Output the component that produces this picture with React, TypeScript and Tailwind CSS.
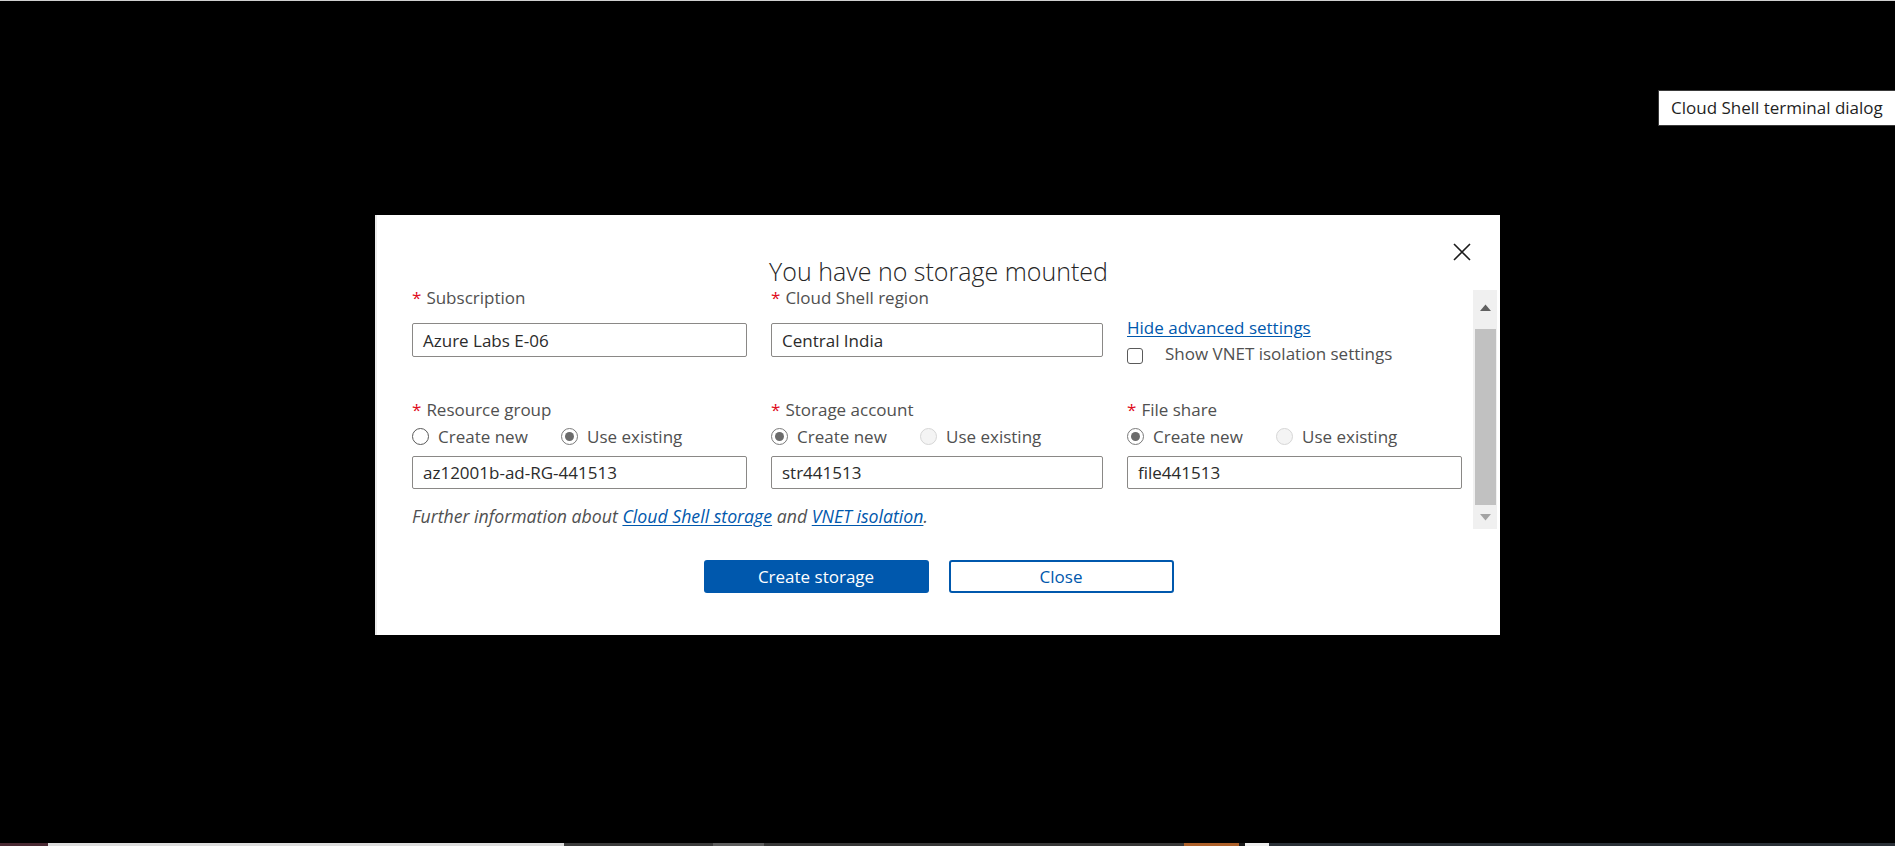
import React from "react";

const font = { fontFamily: '"Open Sans", "Noto Sans", sans-serif' };

function Req({ children }: { children: React.ReactNode }) {
  return (
    <div className="flex items-baseline h-[23px] leading-[23px] text-[17px] text-[#505050]">
      <span className="text-[#e00b1c] mr-[5px] text-[17px]">*</span>
      <span>{children}</span>
    </div>
  );
}

function Input({ value, h = "h-[34px]" }: { value: string; h?: string }) {
  return (
    <div
      className={`${h} w-full border border-[#8a8886] rounded-[2px] flex items-center pl-[10px] text-[17px] leading-[23px] text-[#2b2b2b] bg-white`}
    >
      {value}
    </div>
  );
}

function Radio({
  label,
  state,
  w,
}: {
  label: string;
  state: "off" | "on" | "disabled";
  w: string;
}) {
  return (
    <div className={`flex items-center ${w}`}>
      {state === "off" && (
        <span className="w-[17px] h-[17px] rounded-full border border-[#5a5a5a] bg-white box-border" />
      )}
      {state === "on" && (
        <span className="w-[17px] h-[17px] rounded-full border border-[#7a7a7a] bg-white box-border flex items-center justify-center">
          <span className="w-[9px] h-[9px] rounded-full bg-[#6b6b6b]" />
        </span>
      )}
      {state === "disabled" && (
        <span className="w-[17px] h-[17px] rounded-full border border-[#d6d6d6] bg-[#f4f4f4] box-border" />
      )}
      <span className="ml-[9px] text-[17px] leading-[23px] text-[#505050]">{label}</span>
    </div>
  );
}

export default function App() {
  return (
    <div className="w-[1895px] h-[846px] bg-black relative overflow-hidden" style={font}>
      <div className="h-px w-full bg-[#cfcfcf]" />

      {/* tooltip */}
      <div className="absolute left-[1658px] top-[90px] w-[240px] h-[36px] bg-white border border-[#3a3a3a] flex items-center pl-[12px] text-[17px] text-[#1f1f1f] leading-[22px] whitespace-nowrap">
        Cloud Shell terminal dialog
      </div>

      {/* dialog */}
      <div className="ml-[375px] mt-[214px] w-[1125px] h-[420px] bg-white relative border-l-[2px] border-[#ececec]">
        <button className="absolute left-[1076px] top-[28px] w-[18px] h-[18px]">
          <svg width="18" height="18" viewBox="0 0 18 18">
            <path d="M1 1 L17 17 M17 1 L1 17" stroke="#1b1b1b" strokeWidth="1.6" fill="none" />
          </svg>
        </button>

        <div className="pt-[42px] text-center text-[25px] leading-[29px] font-light text-[#252525]">
          You have no storage mounted
        </div>

        <div className="flex items-start">
          <div className="ml-[35px] w-[1050px]">
            <div className="grid grid-cols-[335px_332px_335px] gap-x-[24px]">
              <div className="flex flex-col">
                <Req>Subscription</Req>
                <div className="mt-[14px]">
                  <Input value="Azure Labs E-06" />
                </div>
              </div>
              <div className="flex flex-col">
                <Req>Cloud Shell region</Req>
                <div className="mt-[14px]">
                  <Input value="Central India" />
                </div>
              </div>
              <div className="flex flex-col pt-[30px] h-[71px]">
                <a className="text-[17px] leading-[23px] text-[#0058ad] underline underline-offset-2 cursor-pointer">
                  Hide advanced settings
                </a>
                <div className="flex items-center mt-[3px] h-[23px]">
                  <span className="w-[16px] h-[16px] mt-[4px] border border-[#5a5a5a] rounded-[3px] bg-white" />
                  <span className="ml-[22px] text-[17px] leading-[23px] text-[#505050]">
                    Show VNET isolation settings
                  </span>
                </div>
              </div>

              <div className="flex flex-col mt-[41px]">
                <Req>Resource group</Req>
                <div className="flex items-center mt-[4px] h-[23px]">
                  <Radio label="Create new" state="off" w="w-[149px]" />
                  <Radio label="Use existing" state="on" w="" />
                </div>
                <div className="mt-[8px]">
                  <Input value="az12001b-ad-RG-441513" h="h-[33px]" />
                </div>
              </div>
              <div className="flex flex-col mt-[41px]">
                <Req>Storage account</Req>
                <div className="flex items-center mt-[4px] h-[23px]">
                  <Radio label="Create new" state="on" w="w-[149px]" />
                  <Radio label="Use existing" state="disabled" w="" />
                </div>
                <div className="mt-[8px]">
                  <Input value="str441513" h="h-[33px]" />
                </div>
              </div>
              <div className="flex flex-col mt-[41px]">
                <Req>File share</Req>
                <div className="flex items-center mt-[4px] h-[23px]">
                  <Radio label="Create new" state="on" w="w-[149px]" />
                  <Radio label="Use existing" state="disabled" w="" />
                </div>
                <div className="mt-[8px]">
                  <Input value="file441513" h="h-[33px]" />
                </div>
              </div>
            </div>
            <div className="mt-[16px] text-[17.7px] leading-[23px] italic text-[#505050]">
              Further information about{" "}
              <a className="text-[#0058ad] underline underline-offset-2 cursor-pointer">Cloud Shell storage</a> and{" "}
              <a className="text-[#0058ad] underline underline-offset-2 cursor-pointer">VNET isolation</a>.
            </div>
          </div>

          {/* scrollbar */}
          <div className="ml-[11px] mt-[4px] w-[24px] h-[239px] bg-[#f0f0f0] flex flex-col items-center">
            <div className="h-[34px] w-full flex items-center justify-center">
              <svg width="11" height="7" viewBox="0 0 11 7">
                <path d="M0 7 L5.5 0.5 L11 7 Z" fill="#606060" />
              </svg>
            </div>
            <div className="w-[21px] h-[176px] bg-[#c1c1c1] mt-[5px]" />
            <div className="flex-1 w-full flex items-center justify-center">
              <svg width="11" height="7" viewBox="0 0 11 7">
                <path d="M0 0 L11 0 L5.5 6.5 Z" fill="#a3a3a3" />
              </svg>
            </div>
          </div>
        </div>

        <div className="flex justify-center gap-[20px] mt-[31px]">
          <button className="w-[225px] h-[33px] bg-[#0058ad] rounded-[3px] text-white text-[17px] leading-[23px]">
            Create storage
          </button>
          <button className="w-[225px] h-[33px] bg-white border-[2px] border-[#0058ad] rounded-[3px] text-[#0058ad] text-[17px] leading-[23px]">
            Close
          </button>
        </div>
      </div>

      {/* bottom strip */}
      <div className="absolute left-0 bottom-0 w-full h-[3px] flex">
        <div className="w-[48px] bg-[#4a2a33]" />
        <div className="w-[516px] bg-[#dcdcdc]" />
        <div className="w-[149px] bg-[#3c3c3c]" />
        <div className="w-[51px] bg-[#5e5e5e]" />
        <div className="w-[420px] bg-[#383838]" />
        <div className="w-[55px] bg-[#ad6029]" />
        <div className="w-[6px] bg-[#1a1a1a]" />
        <div className="w-[24px] bg-[#eeeeee]" />
        <div className="flex-1 bg-[#2b3138]" />
      </div>
    </div>
  );
}
